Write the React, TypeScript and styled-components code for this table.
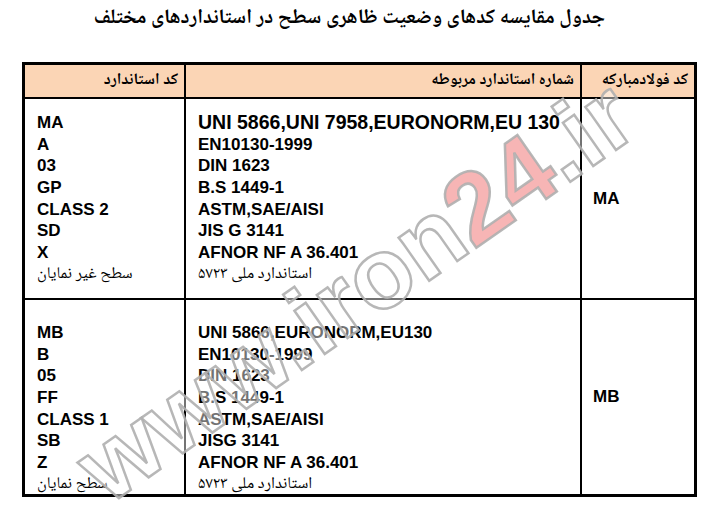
import React from "react";
import styled, { createGlobalStyle } from "styled-components";

const Global = createGlobalStyle`
  html, body { margin: 0; padding: 0; background: #ffffff; }
  body { font-family: "Liberation Sans", Arial, sans-serif; color: #000; }
`;

const faFont = `"Noto Naskh Arabic", "Noto Sans Arabic", "DejaVu Sans", sans-serif`;

const Page = styled.div`
  position: relative;
  width: 709px;
  height: 515px;
  overflow: hidden;
  background: #fff;
`;

const Title = styled.h1`
  margin: 0;
  height: 62px;
  box-sizing: border-box;
  padding-top: 4px;
  padding-right: 10px;
  text-align: center;
  direction: rtl;
  font-family: ${faFont};
  font-weight: 700;
  font-size: 20.5px;
  line-height: 30px;
`;

const Table = styled.div`
  margin-left: 22px;
  width: 675px;
  box-sizing: border-box;
  display: grid;
  grid-template-columns: 159px 394px 112px;
  grid-template-rows: 32px 199px 194px;
  gap: 2px;
  padding: 3px;
  background: #000;
`;

const HeadCell = styled.div`
  background: #fbd5b5;
  display: flex;
  align-items: center;
  justify-content: flex-start;
  direction: rtl;
  padding-right: 6px;
  font-family: ${faFont};
  font-weight: 700;
  font-size: 16px;
  line-height: 20px;
  white-space: nowrap;
`;

const Cell = styled.div<{ $padTop: number }>`
  background: #fff;
  box-sizing: border-box;
  padding: ${(p) => p.$padTop}px 8px 0 12px;
  display: flex;
  flex-direction: column;
`;

const CodeCell = styled.div`
  background: #fff;
  box-sizing: border-box;
  padding-left: 11px;
  display: flex;
  align-items: center;
  font-weight: 700;
  font-size: 17px;
`;

const Line = styled.div<{ $big?: boolean }>`
  height: 21.7px;
  line-height: 21.7px;
  white-space: nowrap;
  font-weight: 700;
  font-size: ${(p) => (p.$big ? "19.5px" : "17px")};
`;

const PersianLine = styled.div`
  height: 21.7px;
  line-height: 21.7px;
  white-space: nowrap;
  font-family: ${faFont};
  font-size: 16.5px;
  direction: rtl;
  align-self: flex-start;
`;

const Watermark = styled.div`
  position: absolute;
  left: 355px;
  top: 290px;
  transform: translate(-50%, -50%) rotate(-35deg);
  font-family: "Liberation Sans", Arial, sans-serif;
  font-weight: 700;
  font-size: 100px;
  line-height: 0.8;
  white-space: nowrap;
  color: rgba(255, 255, 255, 0.45);
  -webkit-text-stroke: 2.5px rgba(175, 175, 175, 0.9);
  pointer-events: none;
`;

const Red = styled.span`
  color: rgba(240, 120, 120, 0.55);
`;

type Group = {
  codes: string[];
  codesFa: string;
  stds: string[];
  bigFirst: boolean;
  mark: string;
  padTop: number;
};

const groups: Group[] = [
  {
    codes: ["MA", "A", "03", "GP", "CLASS 2", "SD", "X"],
    codesFa: "سطح غیر نمایان",
    stds: [
      "UNI 5866,UNI 7958,EURONORM,EU 130",
      "EN10130-1999",
      "DIN 1623",
      "B.S 1449-1",
      "ASTM,SAE/AISI",
      "JIS G 3141",
      "AFNOR NF A 36.401",
    ],
    bigFirst: true,
    mark: "MA",
    padTop: 13,
  },
  {
    codes: ["MB", "B", "05", "FF", "CLASS 1", "SB", "Z"],
    codesFa: "سطح نمایان",
    stds: [
      "UNI 5866,EURONORM,EU130",
      "EN10130-1999",
      "DIN 1623",
      "B.S 1449-1",
      "ASTM,SAE/AISI",
      "JISG 3141",
      "AFNOR NF A 36.401",
    ],
    bigFirst: false,
    mark: "MB",
    padTop: 22,
  },
];

export default function App() {
  return (
    <Page>
      <Global />
      <Title>جدول مقایسه کدهای وضعیت ظاهری سطح در استانداردهای مختلف</Title>
      <Table>
        <HeadCell>کد استاندارد</HeadCell>
        <HeadCell>شماره استاندارد مربوطه</HeadCell>
        <HeadCell>کد فولادمبارکه</HeadCell>
        {groups.map((g) => (
          <React.Fragment key={g.mark}>
            <Cell $padTop={g.padTop}>
              {g.codes.map((c) => (
                <Line key={c}>{c}</Line>
              ))}
              <PersianLine>{g.codesFa}</PersianLine>
            </Cell>
            <Cell $padTop={g.padTop}>
              {g.stds.map((s, i) => (
                <Line key={s} $big={g.bigFirst && i === 0}>
                  {s}
                </Line>
              ))}
              <PersianLine>استاندارد ملی ۵۷۲۳</PersianLine>
            </Cell>
            <CodeCell>{g.mark}</CodeCell>
          </React.Fragment>
        ))}
      </Table>
      <Watermark>
        www.iron<Red>24</Red>.ir
      </Watermark>
    </Page>
  );
}
